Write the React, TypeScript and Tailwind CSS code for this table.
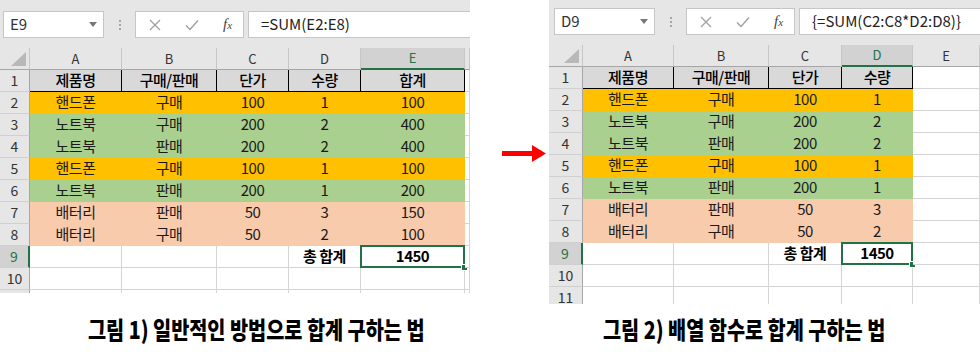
import React from "react"

// cell fills, written out in full so Tailwind picks them up
const fills: Record<string, string> = {
  head: "bg-[#d9d9d9] border-black text-black font-medium",
  orange: "bg-[#ffc000] border-[#ffc000] text-[#1a1a1a]",
  green: "bg-[#a9d08e] border-[#a9d08e] text-[#1a1a1a]",
  peach: "bg-[#f8cbad] border-[#f8cbad] text-[#1a1a1a]",
  none: "bg-white border-[#d4d4d4] text-[#1a1a1a]",
}

const baseRows = [
  { fill: "head", cells: ["제품명", "구매/판매", "단가", "수량", "합계"] },
  { fill: "orange", cells: ["핸드폰", "구매", "100", "1", "100"] },
  { fill: "green", cells: ["노트북", "구매", "200", "2", "400"] },
  { fill: "green", cells: ["노트북", "판매", "200", "2", "400"] },
  { fill: "orange", cells: ["핸드폰", "구매", "100", "1", "100"] },
  { fill: "green", cells: ["노트북", "판매", "200", "1", "200"] },
  { fill: "peach", cells: ["배터리", "판매", "50", "3", "150"] },
  { fill: "peach", cells: ["배터리", "구매", "50", "2", "100"] },
]

type SheetProps = {
  gridClass: string
  barClass: string
  heightClass: string
  letters: string[]
  dataCols: number
  selCol: number
  name: string
  formula: string
}

function Toolbar({ barClass, name, formula }: { barClass: string; name: string; formula: string }) {
  return (
    <div className={`flex items-start bg-[#e6e6e6] ${barClass}`}>
      <div className="w-[101px] h-[27px] bg-white border border-[#c6c6c6] flex items-center pl-[6px] pr-[6px]">
        <span className="flex-1 text-[15px] text-[#333]">{name}</span>
        <svg width="8" height="5" viewBox="0 0 8 5">
          <path d="M0 0 L8 0 L4 5 Z" fill="#777" />
        </svg>
      </div>
      <div className="w-[31px] h-[27px] flex flex-col items-center justify-center gap-[2px]">
        <div className="w-[2px] h-[2px] bg-[#a6a6a6]" />
        <div className="w-[2px] h-[2px] bg-[#a6a6a6]" />
        <div className="w-[2px] h-[2px] bg-[#a6a6a6]" />
      </div>
      <div className="w-[109px] h-[27px] bg-white border border-[#c6c6c6] flex items-center pl-[13px] gap-[24px]">
        <svg width="12" height="12" viewBox="0 0 12 12">
          <path d="M1 1 L11 11 M11 1 L1 11" stroke="#a0a0a0" strokeWidth="1.3" />
        </svg>
        <svg width="14" height="12" viewBox="0 0 14 12">
          <path d="M1 6.5 L5 10.5 L13 1.5" stroke="#a0a0a0" strokeWidth="1.4" fill="none" />
        </svg>
        <span className="font-['Liberation_Serif',serif] italic text-[#444] text-[15px] leading-none">
          f<span className="text-[11px]">x</span>
        </span>
      </div>
      <div className="flex-1 ml-[4px] h-[27px] bg-white border border-r-0 border-[#c6c6c6] flex items-center pl-[12px] text-[15px] text-[#222]">
        {formula}
      </div>
    </div>
  )
}

function Sheet({ gridClass, barClass, heightClass, letters, dataCols, selCol, name, formula }: SheetProps) {
  const totalRow = letters.map((_, ci) => {
    if (ci === dataCols - 2) return "총 합계"
    if (ci === dataCols - 1) return "1450"
    return ""
  })

  return (
    <div className={`overflow-hidden ${heightClass}`}>
      <Toolbar barClass={barClass} name={name} formula={formula} />
      <div className={`grid ${gridClass} font-['Noto_Sans_CJK_KR',sans-serif]`}>
        {/* column headers */}
        <div className="h-[22px] bg-[#e6e6e6] border-r border-b border-r-[#c6c6c6] border-b-[#a6a6a6] flex items-end justify-end pr-[3px] pb-[3px]">
          <svg width="15" height="14" viewBox="0 0 15 14">
            <path d="M15 0 L15 14 L0 14 Z" fill="#b8b8b8" />
          </svg>
        </div>
        {letters.map((l, ci) =>
          ci === selCol ? (
            <div key={ci} className="h-[22px] bg-[#d2d2d2] border-r border-r-[#c6c6c6] border-b-2 border-b-[#217346] flex items-center justify-center text-[13px] text-[#217346]">
              {l}
            </div>
          ) : (
            <div key={ci} className="h-[22px] bg-[#e6e6e6] border-r border-b border-r-[#c6c6c6] border-b-[#a6a6a6] flex items-center justify-center text-[13px] text-[#333]">
              {l}
            </div>
          )
        )}

        {/* data rows */}
        {baseRows.map((row, ri) => (
          <React.Fragment key={ri}>
            <div className="h-[22px] bg-[#e6e6e6] border-r border-b border-r-[#a6a6a6] border-b-[#d0d0d0] flex items-center justify-center text-[14px] text-[#333]">
              {ri + 1}
            </div>
            {letters.map((_, ci) => (
              <div
                key={ci}
                className={`h-[22px] border-r border-b flex items-center justify-center text-[15px] tracking-[-0.5px] whitespace-nowrap ${ci < dataCols ? fills[row.fill] : fills.none}`}
              >
                {ci < dataCols ? row.cells[ci] : ""}
              </div>
            ))}
          </React.Fragment>
        ))}

        {/* total row */}
        <div className="h-[22px] bg-[#d2d2d2] border-b border-b-[#d0d0d0] border-r-2 border-r-[#217346] flex items-center justify-center text-[14px] text-[#217346]">
          9
        </div>
        {totalRow.map((t, ci) => (
          <div
            key={ci}
            className="relative h-[22px] border-r border-b border-[#d4d4d4] bg-white flex items-center justify-center text-[15px] tracking-[-0.5px] font-bold text-black whitespace-nowrap"
          >
            {t}
            {ci === dataCols - 1 && (
              <>
                <div className="absolute -left-px -top-px right-[-1px] bottom-[-1px] border-2 border-[#217346]" />
                <div className="absolute right-[-4px] bottom-[-4px] w-[7px] h-[7px] bg-[#217346] border border-white" />
              </>
            )}
          </div>
        ))}

        {/* empty rows, the last one cut by the sheet's height */}
        {[10, 11].map((n) => (
          <React.Fragment key={n}>
            <div className="h-[22px] bg-[#e6e6e6] border-r border-b border-r-[#a6a6a6] border-b-[#d0d0d0] flex items-center justify-center text-[14px] text-[#333]">
              {n}
            </div>
            {letters.map((_, ci) => (
              <div key={ci} className="h-[22px] border-r border-b border-[#d4d4d4] bg-white" />
            ))}
          </React.Fragment>
        ))}
      </div>
    </div>
  )
}

export default function App() {
  return (
    <div className="w-[980px] h-[356px] bg-white overflow-hidden font-['Noto_Sans_CJK_KR',sans-serif]">
      <div className="flex items-start">
        <div className="w-[470px]">
          <Sheet
            gridClass="grid-cols-[30px_92px_95px_72px_72px_104px_5px]"
            barClass="h-[48px] pt-[11px] pl-[3px]"
            heightClass="h-[293px]"
            letters={["A", "B", "C", "D", "E", ""]}
            dataCols={5}
            selCol={4}
            name="E9"
            formula="=SUM(E2:E8)"
          />
        </div>

        {/* arrow between the two sheets */}
        <div className="w-[79px] pt-[145px] pl-[32px]">
          <svg width="44" height="17" viewBox="0 0 44 17">
            <rect x="0" y="6" width="32" height="5" fill="#ff0000" />
            <path d="M30 0 L44 8.5 L30 17 Z" fill="#ff0000" />
          </svg>
        </div>

        <div className="w-[431px]">
          <Sheet
            gridClass="grid-cols-[34px_91px_95px_73px_71px_67px]"
            barClass="h-[45px] pt-[8px] pl-[5px]"
            heightClass="h-[304px]"
            letters={["A", "B", "C", "D", "E"]}
            dataCols={4}
            selCol={3}
            name="D9"
            formula="{=SUM(C2:C8*D2:D8)}"
          />
        </div>
      </div>

      {/* captions */}
      <div className="flex mt-[12px] text-[24px] leading-[26px] font-black text-black">
        <div className="w-[512px] flex justify-center">
          <span className="inline-block scale-x-[0.82] whitespace-nowrap">그림 1) 일반적인 방법으로 합계 구하는 법</span>
        </div>
        <div className="w-[464px] flex justify-center">
          <span className="inline-block scale-x-[0.82] whitespace-nowrap">그림 2) 배열 함수로 합계 구하는 법</span>
        </div>
      </div>
    </div>
  )
}
